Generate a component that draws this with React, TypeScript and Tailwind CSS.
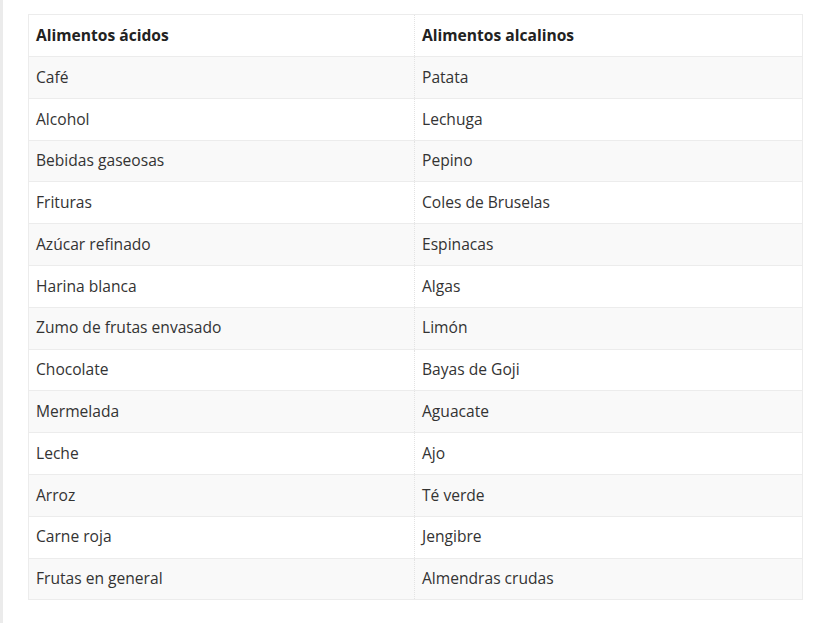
const rows: [string, string][] = [
  ["Café", "Patata"],
  ["Alcohol", "Lechuga"],
  ["Bebidas gaseosas", "Pepino"],
  ["Frituras", "Coles de Bruselas"],
  ["Azúcar refinado", "Espinacas"],
  ["Harina blanca", "Algas"],
  ["Zumo de frutas envasado", "Limón"],
  ["Chocolate", "Bayas de Goji"],
  ["Mermelada", "Aguacate"],
  ["Leche", "Ajo"],
  ["Arroz", "Té verde"],
  ["Carne roja", "Jengibre"],
  ["Frutas en general", "Almendras crudas"],
]

export default function App() {
  return (
    <div className="flex h-[623px] w-[823px] bg-white font-['Open_Sans',sans-serif] text-[#333]">
      <div className="w-[3px] shrink-0 bg-[#ebebeb]" />
      <div className="pl-[25px] pt-[14px]">
        <table className="w-[775px] table-fixed border-collapse border border-[#ececec] text-[15.6px]">
          <thead>
            <tr className="h-[42px] bg-white">
              <th className="w-[386px] border-r border-dotted border-[#e3e3e3] px-[7px] text-left font-bold text-[#222]">
                Alimentos ácidos
              </th>
              <th className="px-[7px] text-left font-bold text-[#222]">Alimentos alcalinos</th>
            </tr>
          </thead>
          <tbody>
            {rows.map(([a, b], i) => (
              <tr
                key={a}
                className={`h-[41.8px] border-t border-[#ececec] ${i % 2 === 0 ? "bg-[#f9f9f9]" : "bg-white"}`}
              >
                <td className="border-r border-dotted border-[#e3e3e3] px-[7px]">{a}</td>
                <td className="px-[7px]">{b}</td>
              </tr>
            ))}
          </tbody>
        </table>
      </div>
    </div>
  )
}
